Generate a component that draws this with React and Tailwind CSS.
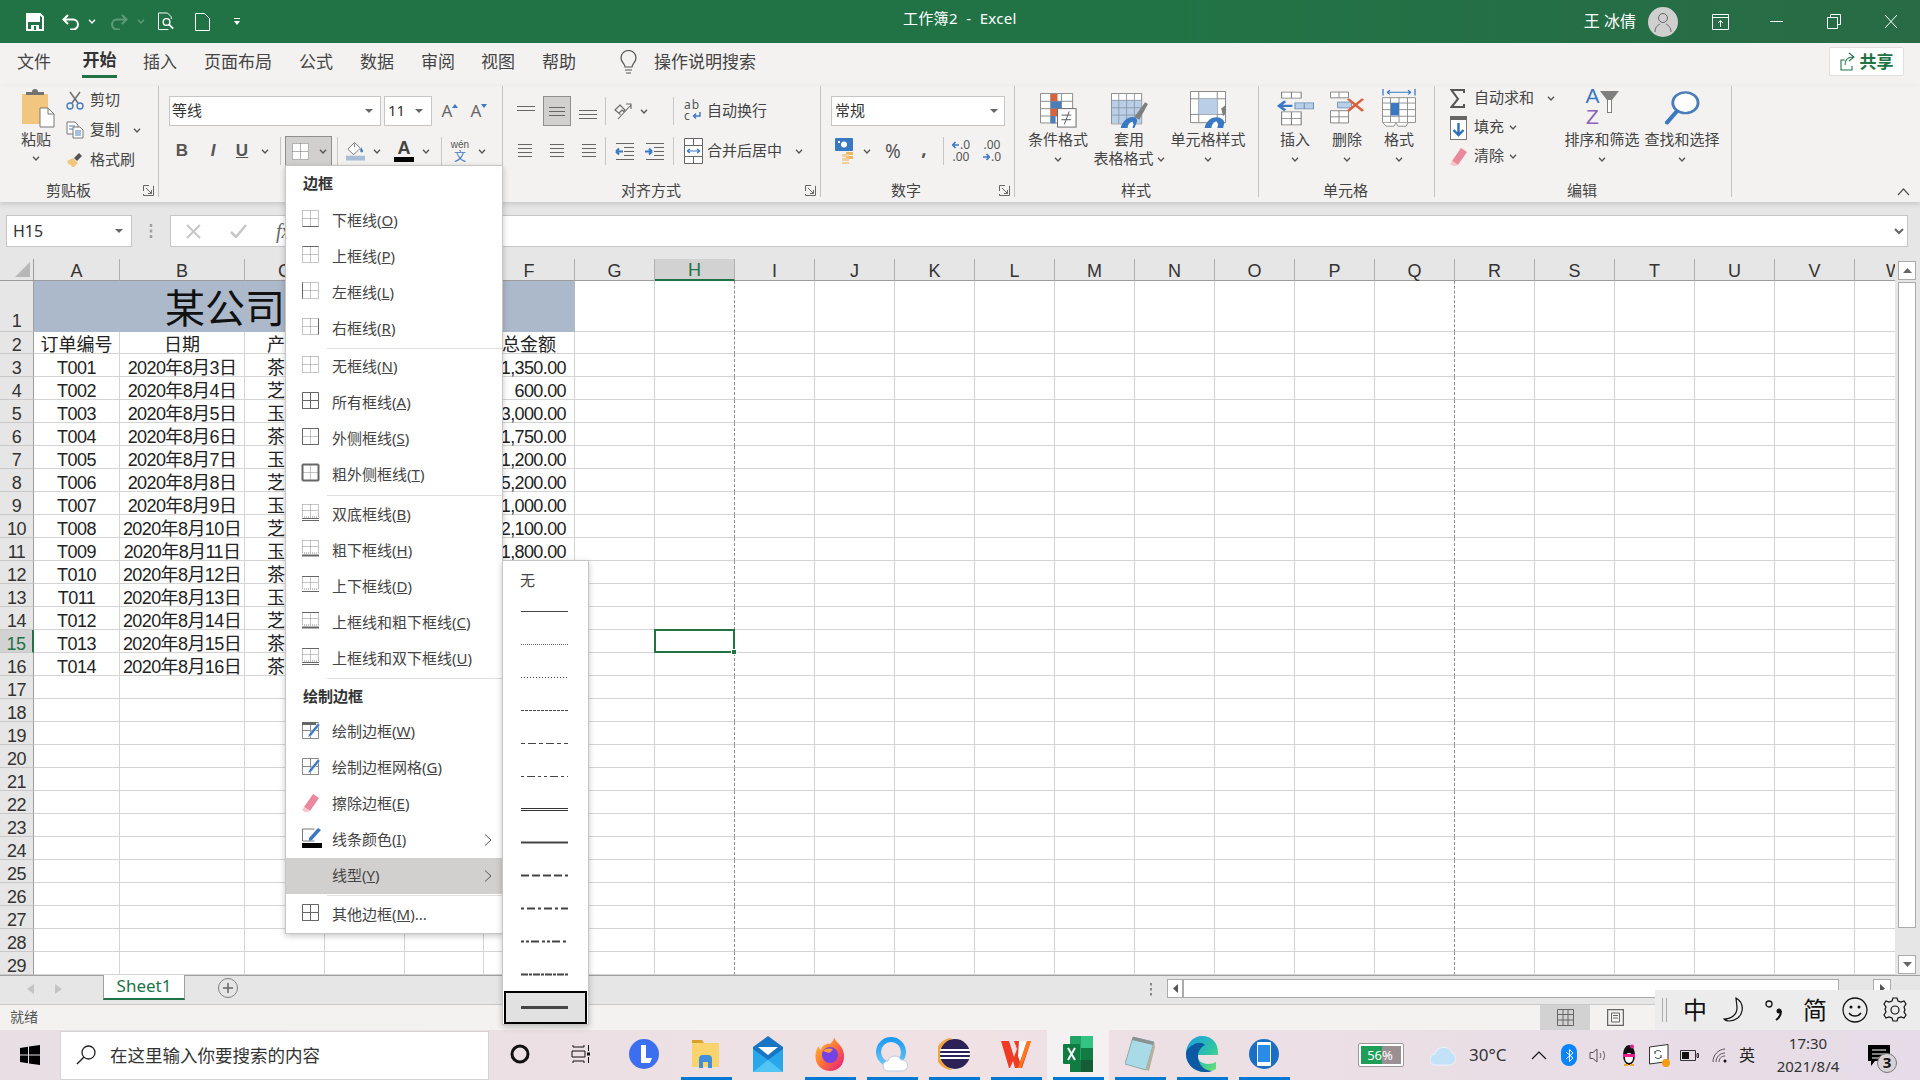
import React from 'react';

const Chev = ({ c = '#555', w = 8, dim = false }) => (
  <svg width={w} height="5" viewBox="0 0 8 5" className="shrink-0"><path d="M1 .8 4 4 7 .8" fill="none" stroke={dim ? '#5f9a79' : c} strokeWidth="1.3" /></svg>
);
const Drop = ({ c = '#666' }) => (
  <svg width="8" height="4" viewBox="0 0 8 4" className="shrink-0"><path d="M0 0h8L4 4z" fill={c} /></svg>
);
const Launcher = () => (
  <svg width="11" height="11" viewBox="0 0 11 11"><path d="M.5 6V.5H6M3 3l5.5 5.5M5 8.5h3.5V5M.5 9v1.5h10V.8" fill="none" stroke="#666" strokeWidth="1" /></svg>
);
const VSep = () => (<div className="w-[4px] h-[28px] flex justify-center shrink-0"><div className="w-px h-full bg-[#c8c6c4]" /></div>);

const Lines = ({ rows, w = 18, h = 18 }) => (
  <svg width={w} height={h} viewBox={`0 0 ${w} ${h}`}>
    {rows.map((r, i) => <path key={i} d={`M${r[0]} ${r[2]}.5H${r[1]}`} stroke="#666" strokeWidth="1" />)}
  </svg>
);

const Slot = ({ className = '', children }) => <div className={`flex items-center justify-center shrink-0 ${className}`}>{children}</div>;

const Group = ({ w, children, label, pl, launcher }) => (
  <div className={`${w} h-[111px] flex flex-col border-r border-[#c4c4c4] shrink-0`}>
    <div className="h-[95px]">{children}</div>
    <div className={`h-[16px] pt-[2px] flex items-center ${pl}`}>
      {label && <span className="text-[15px] leading-[14px] text-[#444]">{label}</span>}
      {launcher && <span className="ml-auto mr-[4px] flex"><Launcher /></span>}
    </div>
  </div>
);

const BigBtn = ({ w, icon, l1, l2, noChev }) => (
  <div className={`${w} flex flex-col items-center pt-[2px] shrink-0`}>
    <div className="h-[40px] flex items-end justify-center">{icon}</div>
    <div className="h-[22px] text-[15px] leading-[22px] whitespace-nowrap text-[#444]">{l1}</div>
    <div className="h-[18px] flex items-center gap-[3px] text-[15px] leading-[16px] whitespace-nowrap text-[#444]">
      {l2 && <span className="-mt-[2px]">{l2}</span>}
      {!noChev && <Chev />}
    </div>
  </div>
);

/* Ribbon icons */
const PasteIcon = () => (
  <svg width="36" height="39" viewBox="0 0 36 39">
    <path d="M2 5h26v30H2z" fill="#f2c67f" />
    <path d="M6 6V3h6a3 3 0 0 1 6 0h6v3z" fill="#737373" />
    <path d="M20 19h8l6 6v13H20z" fill="#fff" stroke="#777" />
    <path d="M28 19v6h6" fill="none" stroke="#777" />
  </svg>
);
const ScissorsIcon = () => (
  <svg width="18" height="19" viewBox="0 0 18 19">
    <path d="M4 1l8 11M14 1 6 12" stroke="#737373" strokeWidth="1.6" fill="none" />
    <circle cx="4" cy="15" r="3" fill="none" stroke="#4a7ebb" strokeWidth="1.4" />
    <circle cx="14" cy="15" r="3" fill="none" stroke="#4a7ebb" strokeWidth="1.4" />
  </svg>
);
const CopyIcon = () => (
  <svg width="18" height="18" viewBox="0 0 18 18">
    <path d="M1 1h8l3 3v9H1z" fill="#fff" stroke="#777" />
    <path d="M3 5h6M3 8h6" stroke="#4a7ebb" />
    <path d="M7 6h7l3 3v8H7z" fill="#fff" stroke="#777" />
    <path d="M9 10h6M9 12h6M9 14h6" stroke="#4a7ebb" />
  </svg>
);
const PainterIcon = () => (
  <svg width="18" height="16" viewBox="0 0 18 16">
    <path d="M1 9l6-3 5 5-4 4H6L4 12 3 13z" fill="#f2c67f" />
    <path d="M8 6l5-5 3 3-5 5z" fill="#555" />
  </svg>
);
const BorderMini = () => (
  <svg width="17" height="17" viewBox="0 0 17 17">
    <rect x="0" y="0" width="17" height="17" fill="#fff" />
    <path d="M.5.5h16v16H.5zM8.500.5v16M.5 8.500h16" fill="none" stroke="#666" strokeDasharray="1 1" />
  </svg>
);
const FillIcon = () => (
  <svg width="20" height="20" viewBox="0 0 20 20">
    <path d="M9 1 2 8l6 6 7-7z" fill="#fff" stroke="#777" />
    <path d="M9 2 9 6" stroke="#777" />
    <path d="M16 6c1 2 2 3 2 4a1.500 1.500 0 0 1-3 0c0-1 0-2 1-4z" fill="#4a7ebb" />
    <rect x="0" y="15" width="20" height="5" fill="#a9bdd6" />
  </svg>
);
const OrientIcon = () => (
  <svg width="20" height="20" viewBox="0 0 20 20">
    <path d="M2 9l5-5 5 5-1.500 1.500L9 9l-3 3 1.500 1.500z" fill="none" stroke="#666" strokeWidth="1.1" />
    <path d="M5 18 18 4M13 3h5v5" fill="none" stroke="#666" strokeWidth="1.1" />
  </svg>
);
const Indent = ({ out }) => (
  <svg width="19" height="17" viewBox="0 0 19 17">
    <path d="M1 .5h18M9 4.500h10M9 8.500h10M9 12.500h10M1 16.500h18" stroke="#666" />
    {out ? <path d="M8 8.500H1M1 8.500l3-3M1 8.500l3 3" stroke="#3b78c4" strokeWidth="2" fill="none" /> : <path d="M0 8.500h7M7 8.500l-3-3M7 8.500l-3 3" stroke="#3b78c4" strokeWidth="2" fill="none" />}
  </svg>
);
const WrapIcon = () => (
  <div className="relative w-[18px] h-[24px] leading-none">
    <span className="block text-[12px] leading-[11px] text-[#555] tracking-[1px]">ab</span>
    <span className="block text-[12px] leading-[11px] text-[#555]">c</span>
    <svg width="9" height="8" viewBox="0 0 9 8" className="absolute left-[8px] top-[13px]"><path d="M8 0v4H2M4 1.500 1.500 4 4 6.500" fill="none" stroke="#3b78c4" strokeWidth="1.4" /></svg>
  </div>
);
const MergeIcon = () => (
  <svg width="19" height="26" viewBox="0 0 19 26">
    <path d="M.5.5h18v25H.5zM.5 7.500h18M.5 18.500h18M9.500.5v7M9.500 18.500v7" fill="#fff" stroke="#666" />
    <path d="M3 13h13M3 13l3-2M3 13l3 2M16 13l-3-2M16 13l-3 2" stroke="#3b78c4" strokeWidth="1.2" fill="none" />
  </svg>
);
const AcctIcon = () => (
  <svg width="20" height="26" viewBox="0 0 20 26">
    <rect x="0" y="0" width="18" height="13" rx="1" fill="#3b78c4" />
    <circle cx="9" cy="6.500" r="3" fill="#fff" />
    <rect x="3" y="3" width="2" height="2" fill="#fff" />
    <rect x="11" y="14" width="7" height="3" fill="#eeb65f" /><rect x="11" y="18" width="7" height="3" fill="#eeb65f" />
    <rect x="7" y="16" width="7" height="3" fill="#f2cf9c" /><rect x="7" y="20" width="7" height="3" fill="#f2cf9c" /><rect x="7" y="24" width="7" height="2" fill="#f2cf9c" />
  </svg>
);
const Decimal = ({ top, bot, inc }) => (
  <div className="flex flex-col items-center text-[12px] leading-[12px] text-[#555] w-[28px]">
    <span className="flex items-center gap-[1px]">{inc ? <svg width="7" height="8" viewBox="0 0 7 8"><path d="M7 4H2M3.500 1 .7 4l2.800 3" stroke="#3b78c4" strokeWidth="1.6" fill="none" /></svg> : null}{top}</span>
    <span className="flex items-center gap-[1px]">{!inc ? <svg width="7" height="8" viewBox="0 0 7 8"><path d="M0 4h5M3.500 1 6.300 4 3.500 7" stroke="#3b78c4" strokeWidth="1.6" fill="none" /></svg> : null}{bot}</span>
  </div>
);
const CondIcon = () => (
  <svg width="37" height="35" viewBox="0 0 38 38" preserveAspectRatio="none">
    <path d="M.5.5h33v32H.5zM.5 9h33M.5 17h33M.5 25h33M11 .5v32M22 .5v32" fill="#fff" stroke="#888" />
    <rect x="11" y="1" width="7" height="8" fill="#d9613c" /><rect x="11" y="9" width="11" height="8" fill="#4a7ebb" />
    <rect x="11" y="17" width="9" height="8" fill="#d9613c" /><rect x="11" y="25" width="5" height="8" fill="#4a7ebb" />
    <rect x="18" y="17" width="19" height="20" fill="#fff" stroke="#666" />
    <path d="M22 24h10M22 29h10M30 20l-5 14" stroke="#555" fill="none" />
  </svg>
);
const TableIcon = () => (
  <svg width="37" height="35" viewBox="0 0 38 38" preserveAspectRatio="none">
    <path d="M.5.5h31v33H.5z" fill="#fff" stroke="#888" />
    <rect x="1" y="8" width="30" height="25" fill="#b9cfe8" />
    <path d="M.5 8h31M.5 16h31M.5 24h31M8 .5v33M16 .5v33M24 .5v33" stroke="#8e9aa7" fill="none" />
    <path d="M24 26 35 10l3 2-9 17z" fill="#7f7f7f" />
    <path d="M10 38c1-6 6-12 12-12 4 0 6 3 4 7l-2 5z" fill="#3b78c4" />
    <path d="M17 38c0-3 2-6 5-7l1 3-1 4z" fill="#fff" />
  </svg>
);
const CellStyleIcon = () => (
  <svg width="37" height="37" viewBox="0 0 38 38" preserveAspectRatio="none">
    <path d="M.5.5h36v32H.5zM.5 8h36M.5 24h36M9 .5v32M28 .5v32" fill="#fff" stroke="#888" />
    <rect x="9" y="8" width="19" height="16" fill="#b9cfe8" />
    <path d="M32 18l5-4v8l-3 4z" fill="#7f7f7f" />
    <path d="M15 38c1-6 6-11 12-11 5 0 9 3 8 7l-1 4z" fill="#3b78c4" />
    <path d="M22 38c0-3 2-6 5-7l2 3-1 4z" fill="#fff" />
  </svg>
);
const InsertIcon = () => (
  <svg width="37" height="35" viewBox="0 0 36 46" preserveAspectRatio="none" className="mb-[2px]">
    <path d="M4.500 1.500h19v8h-19zM14 1.500v8M4.500 27.500h19v17h-19zM14 27.500v17M4.500 36h19" fill="#fff" stroke="#777" />
    <path d="M17.500 15.500h18v8h-18zM26.500 15.500v8" fill="#b9cfe8" stroke="#6d8fb5" />
    <path d="M15 19.500H2M8 13.500l-6 6 6 6" fill="none" stroke="#3b78c4" strokeWidth="3" />
  </svg>
);
const DeleteIcon = () => (
  <svg width="36" height="33" viewBox="0 0 36 46" preserveAspectRatio="none" className="mb-[4px]">
    <path d="M1.500 1.500h18v8h-18zM10 1.500v8M1.500 27.500h18v17h-18zM10 27.500v17M1.500 36h18" fill="#fff" stroke="#777" />
    <path d="M8.500 15.500h14v8h-14z" fill="#b9cfe8" stroke="#6d8fb5" />
    <path d="M19 11l15 17M34 11 19 28" stroke="#d9613c" strokeWidth="3" fill="none" />
  </svg>
);
const FormatIcon = () => (
  <svg width="34" height="38" viewBox="0 0 34 46" preserveAspectRatio="none" className="mb-[1px]">
    <path d="M1 0v8M33 0v8M5 4h24M5 4l3-2.500M5 4l3 2.500M29 4l-3-2.500M29 4l-3 2.500" stroke="#3b78c4" strokeWidth="1.3" fill="none" />
    <path d="M.5 10.500h33v30H.5zM.5 17h33M.5 25h33M.5 33h33M8.500 10.500v30M17 10.500v30M25.500 10.500v30" fill="#fff" stroke="#888" />
    <rect x="9" y="17" width="8" height="15" fill="#3b78c4" />
    <path d="M1 41l3 4h8l2-4M14 41l2 4h8l2-4" fill="#fff" stroke="#888" />
  </svg>
);
const SortIcon = () => (
  <div className="flex items-center gap-0 mb-[1px]">
    <div className="flex flex-col items-center w-[14px]">
      <span className="text-[21px] leading-[20px] font-['Liberation_Sans',sans-serif] text-[#3b78c4]">A</span>
      <span className="text-[21px] leading-[21px] font-['Liberation_Sans',sans-serif] text-[#8a62b8]">Z</span>
    </div>
    <svg width="19" height="23" viewBox="0 0 19 23" className="mb-[8px]"><path d="M0 0h19l-7 9v13H7V9z" fill="#7f7f7f" /><path d="M8 9v12h3V9z" fill="#fff" /></svg>
  </div>
);
const FindIcon = () => (
  <svg width="35" height="35" viewBox="0 0 36 44" preserveAspectRatio="none" className="mb-[3px]">
    <circle cx="21" cy="16" r="13" fill="#fff" stroke="#4a7ebb" strokeWidth="3" />
    <path d="M12 27 2 41" stroke="#3b78c4" strokeWidth="4.500" strokeLinecap="round" />
  </svg>
);
const SigmaIcon = () => (
  <svg width="15" height="20" viewBox="0 0 15 20"><path d="M14 4V1H1.500L8 10l-6.500 8H14v-3" fill="none" stroke="#555" strokeWidth="2" /></svg>
);
const FillDown = () => (
  <svg width="17" height="24" viewBox="0 0 17 24">
    <rect x=".5" y=".5" width="16" height="23" fill="#fff" stroke="#777" /><rect x="0" y="0" width="17" height="4" fill="#666" />
    <path d="M8.500 7v12M3.500 14l5 5 5-5" fill="none" stroke="#2d6fb8" strokeWidth="2.400" />
  </svg>
);
const Eraser = () => (
  <svg width="18" height="19" viewBox="0 0 18 19">
    <path d="M11 1l6 4-9 13-6-4z" fill="#ea899e" />
    <path d="M2 14l6 4-2 1H3l-3-2z" fill="#f6c6d0" />
  </svg>
);

/* Menu icons */
const BorderIcon = ({ sides = [], thick = false }) => {
  const d = { t: 'M.5 .5H16.500', b: 'M.5 16.500H16.500', l: 'M.5 .5V16.500', r: 'M16.500 .5V16.500', h: 'M.5 8.500H16.500', v: 'M8.500 .5V16.500' };
  return (
    <svg width="17" height="18" viewBox="0 0 17 18" overflow="visible">
      <path d="M.5 .5H16.500V16.500H.5ZM8.500 .5V16.500M.5 8.500H16.500" fill="none" stroke="#8a8a8a" strokeDasharray="1 1" />
      {sides.map((s) => <path key={s} d={d[s]} fill="none" stroke="#666" strokeWidth={thick ? 2 : 1} />)}
    </svg>
  );
};
const BottomVar = ({ kind }) => (
  <svg width="17" height="18" viewBox="0 0 17 18" overflow="visible">
    <path d="M.5 .5H16.500V13H.5ZM8.500 .5V13M.5 6.500H16.500" fill="none" stroke="#8a8a8a" strokeDasharray="1 1" />
    {kind === 'double' && <path d="M0 14.500H17M0 16.500H17" stroke="#666" />}
    {kind === 'thick' && <path d="M0 15.500H17" stroke="#666" strokeWidth="2" />}
    {kind === 'tb' && <path d="M0 .5H17M0 15.500H17" stroke="#666" strokeWidth="1" />}
    {kind === 'tthick' && <><path d="M0 .5H17" stroke="#666" /><path d="M0 15.500H17" stroke="#666" strokeWidth="2" /></>}
    {kind === 'tdouble' && <path d="M0 .5H17M0 14.500H17M0 16.500H17" stroke="#666" />}
  </svg>
);
const DrawIcon = ({ grid }) => (
  <svg width="18" height="18" viewBox="0 0 18 18" overflow="visible">
    <path d="M.5 1.500h16v16H.5zM.5 9.500h16M8.500 1.500v16" fill="none" stroke="#8a8a8a" />
    {!grid && <rect x="0" y="1" width="14" height="3" fill="#666" />}
    <path d="M7 13 16 2l2 2-9 11-3 1z" fill="#3b78c4" stroke="#fff" strokeWidth=".5" />
  </svg>
);
const ColorLineIcon = () => (
  <svg width="20" height="20" viewBox="0 0 20 20">
    <path d="M.5 1h12M.5 1v12h12" fill="none" stroke="#777" />
    <path d="M7 10 16 0l3 2-9 10-3 1z" fill="#3b78c4" />
    <rect x="0" y="15" width="20" height="5" fill="#000" />
  </svg>
);
const MenuArrow = () => (
  <svg width="8" height="12" viewBox="0 0 8 12" className="ml-auto mr-[10px]"><path d="M1 .5 7 6 1 11.500" fill="none" stroke="#555" /></svg>
);

const MI = ({ icon, k, label, arrow, active }) => (
  <div className={`h-[36px] flex items-center pl-[16px] text-[15px] text-[#444] ${active ? 'bg-[#d2d0ce]' : ''}`}>
    <div className="w-[30px] h-[36px] flex items-center"><div className="mb-[4px] flex">{icon}</div></div>
    <span className="whitespace-nowrap -mt-[2px]">{label}(<u>{k}</u>){arrow === 'dots' ? '...' : ''}</span>
    {arrow === true && <MenuArrow />}
  </div>
);
const MSep = ({ h }) => (<div className={`${h} flex items-center pl-[41px]`}><div className="w-full h-px bg-[#e1dfdd]" /></div>);

const LineStyle = ({ sw = 1, dash, c = '#444', dbl }) => (
  <svg width="47" height="5" viewBox="0 0 47 5">
    {dbl ? <path d="M0 1.500H47M0 3.500H47" stroke={c} /> : <path d="M0 2.500H47" stroke={c} strokeWidth={sw} strokeDasharray={dash} />}
  </svg>
);

/* Grid data */
const COLS = ['A', 'B', 'C', 'D', 'E', 'F', 'G', 'H', 'I', 'J', 'K', 'L', 'M', 'N', 'O', 'P', 'Q', 'R', 'S', 'T', 'U', 'V', 'W'];
const CW = ['w-[86px]', 'w-[125px]', 'w-[80px]', 'w-[80px]', 'w-[79px]', 'w-[91px]'];
const colW = (i) => CW[i] || 'w-[80px]';
const DATA = {
  3: ['T001', '2020年8月3日', '茶', '1,350.00'],
  4: ['T002', '2020年8月4日', '芝', '600.00'],
  5: ['T003', '2020年8月5日', '玉', '3,000.00'],
  6: ['T004', '2020年8月6日', '茶', '1,750.00'],
  7: ['T005', '2020年8月7日', '玉', '1,200.00'],
  8: ['T006', '2020年8月8日', '芝', '5,200.00'],
  9: ['T007', '2020年8月9日', '玉', '1,000.00'],
  10: ['T008', '2020年8月10日', '芝', '2,100.00'],
  11: ['T009', '2020年8月11日', '玉', '1,800.00'],
  12: ['T010', '2020年8月12日', '茶', ''],
  13: ['T011', '2020年8月13日', '玉', ''],
  14: ['T012', '2020年8月14日', '芝', ''],
  15: ['T013', '2020年8月15日', '茶', ''],
  16: ['T014', '2020年8月16日', '茶', ''],
};
const cellFont = "font-['Liberation_Sans','Noto_Sans_CJK_SC',sans-serif]";

const Cell = ({ i, children, className = '' }) => {
  const dashed = i === 7 || i === 16;
  return (
    <div className={`${colW(i)} h-full shrink-0 border-b border-b-[#d4d4d4] border-r flex items-center ${dashed ? '[border-right-style:dashed] border-r-[#8f8f8f]' : 'border-r-[#d4d4d4]'} ${className}`}>{children}</div>
  );
};

const RowHead = ({ n, active, end, shift }) => (
  <div className={`w-[34px] h-full shrink-0 flex justify-center border-b border-b-[#c8c8c8] tracking-[-0.6px] ${shift} ${end ? 'items-end' : 'items-center'} ${active ? 'bg-[#d2d2d2] text-[#217346] border-r-2 border-r-[#217346]' : 'bg-[#e6e6e6] text-[#333] border-r border-r-[#9c9c9c]'}`}>{n}</div>
);

const GridRow = ({ n }) => {
  const d = DATA[n];
  return (
    <div className="h-[23px] flex leading-[18px] text-[18px] text-[#222]">
      <RowHead n={n} active={n === 15} shift="pt-[5px]" />
      {COLS.map((c, i) => {
        if (d && i === 0) return <Cell key={c} i={i} className="justify-center pt-[5px] tracking-[-0.5px]">{d[0]}</Cell>;
        if (d && i === 1) return <Cell key={c} i={i} className="justify-center pt-[5px] tracking-[-0.6px]">{d[1]}</Cell>;
        if (d && i === 2) return <Cell key={c} i={i} className="pl-[22px] pt-[5px]">{d[2]}</Cell>;
        if (d && i === 5) return <Cell key={c} i={i} className="justify-end pr-[8px] pt-[5px] tracking-[-0.6px]">{d[3]}</Cell>;
        if (n === 15 && i === 7) return (
          <Cell key={c} i={i} className="relative">
            <div className="absolute -left-px -top-px -right-px -bottom-px border-2 border-[#217346]" />
            <div className="absolute -right-[3px] -bottom-[3px] w-[6px] h-[6px] bg-[#217346] border border-white" />
          </Cell>
        );
        return <Cell key={c} i={i} />;
      })}
    </div>
  );
};

/* Taskbar app icons */
const AppL = () => (
  <svg width="30" height="30" viewBox="0 0 30 30">
    <circle cx="15" cy="15" r="15" fill="#3b6ff0" />
    <path d="M12 6h5v13h6l-2 5H12z" fill="#fff" />
  </svg>
);
const AppFolder = () => (
  <svg width="28" height="30" viewBox="0 0 28 30">
    <path d="M0 1h10l2 3H0z" fill="#d9a12c" />
    <rect x="0" y="4" width="27" height="24" fill="#fbd36c" />
    <path d="M7 29V20a4 4 0 0 1 4-4h5a4 4 0 0 1 4 4v9h-4v-6h-5v6z" fill="#3f8fdb" />
  </svg>
);
const AppMail = () => (
  <svg width="30" height="36" viewBox="0 0 30 36">
    <path d="M0 11 15 0l15 11v25H0z" fill="#1775c4" />
    <path d="M5 11h20l-10 8z" fill="#fff" />
    <path d="M0 13 15 24 30 13v23H0z" fill="#28a8ea" />
    <path d="M0 36 15 24l15 12z" fill="#50c5f5" />
  </svg>
);
const AppFox = () => (
  <svg width="30" height="34" viewBox="0 0 30 34">
    <defs><linearGradient id="fx" x1="0" y1="0" x2="1" y2="1"><stop offset="0" stopColor="#ffcb30" /><stop offset=".5" stopColor="#ff7139" /><stop offset="1" stopColor="#e31587" /></linearGradient></defs>
    <path d="M19 0c1 4 5 6 8 11 3 6 3 14-2 19-6 6-17 5-22-2C-1 22 0 13 4 9c0 2 1 3 2 4 1-5 6-7 9-6 2-2 4-4 4-7z" fill="url(#fx)" />
    <circle cx="15" cy="18" r="8" fill="#7542e5" />
    <path d="M8 14c3-3 8-3 10-1l-4 3z" fill="#ff9a3c" />
  </svg>
);
const AppQQB = () => (
  <svg width="32" height="38" viewBox="0 0 32 38">
    <defs><linearGradient id="qb" x1="0" y1="0" x2="0" y2="1"><stop offset="0" stopColor="#1e9bf0" /><stop offset="1" stopColor="#69c5f9" /></linearGradient></defs>
    <circle cx="15" cy="17" r="12.500" fill="none" stroke="url(#qb)" strokeWidth="5" />
    <path d="M12 36a5 5 0 0 1 0-10 7 7 0 0 1 13-1 5.500 5.500 0 0 1 2 11z" fill="#fff" stroke="#bcd" />
  </svg>
);
const AppEclipse = () => (
  <svg width="32" height="32" viewBox="0 0 32 32">
    <path d="M14 0a16 16 0 0 0 0 32 20 20 0 0 1 0-32z" fill="#f0a544" />
    <circle cx="17" cy="16" r="15" fill="#2c2255" />
    <path d="M2 11h30v2H2zM2 15h30v2H2zM2 19h30v2H2z" fill="#fff" />
  </svg>
);
const AppWps = () => (
  <svg width="30" height="28" viewBox="0 0 30 28">
    <path d="M0 1h8l5 16 3-8-3-8h17l-9 27h-7l-2-7-3 7H8z" fill="#f03b24" />
    <path d="M18 1h8l-7 21-2-6z" fill="#fff" />
    <path d="M20 28 30 1h-4l-9 27z" fill="#ff7a1a" />
  </svg>
);
const AppExcel = () => (
  <svg width="30" height="36" viewBox="0 0 30 36">
    <rect x="7" y="0" width="23" height="36" rx="1" fill="#21a366" />
    <rect x="18" y="0" width="12" height="12" fill="#33c481" />
    <rect x="18" y="12" width="12" height="12" fill="#107c41" />
    <rect x="18" y="24" width="12" height="12" fill="#185c37" />
    <rect x="7" y="24" width="11" height="12" fill="#107c41" />
    <rect x="0" y="8" width="17" height="20" rx="1" fill="#107c41" />
    <path d="M5 12l7 12M12 12 5 24" stroke="#fff" strokeWidth="2" />
  </svg>
);
const AppNote = () => (
  <svg width="30" height="36" viewBox="0 0 30 36">
    <path d="M8 1 29 6 21 34 0 28z" fill="#a9dbe7" stroke="#8aa" />
    <path d="M8 1 29 6l-1 3L7 4z" fill="#8a8f8f" />
    <path d="M29 6l-8 28 3 1 6-24z" fill="#b9b09a" />
  </svg>
);
const AppEdge = () => (
  <svg width="32" height="36" viewBox="0 0 32 36">
    <defs>
      <linearGradient id="ed" x1="0" y1="0" x2="1" y2="1"><stop offset="0" stopColor="#1b9de2" /><stop offset=".6" stopColor="#2fc5a5" /><stop offset="1" stopColor="#7ce36a" /></linearGradient>
    </defs>
    <path d="M16 0c10 0 16 7 16 16v3H11c0 5 5 9 11 9 3 0 6-1 8-2v7c-3 2-7 3-11 3C8 36 0 28 0 18 0 8 7 0 16 0z" fill="url(#ed)" />
    <path d="M0 18c0 10 8 18 19 18 3 0 5 0 7-1-6 0-14-5-14-15 0-5 3-9 7-11-3-3-8-3-12 0C3 11 0 14 0 18z" fill="#0c59a4" />
  </svg>
);
const AppPhone = () => (
  <svg width="30" height="30" viewBox="0 0 30 30">
    <circle cx="15" cy="15" r="15" fill="#1a6fc4" />
    <rect x="8" y="3" width="14" height="24" rx="1" fill="#fff" />
    <rect x="9" y="6" width="12" height="17" fill="#2a8ce8" />
  </svg>
);
const AppSlot = ({ children, run, active }) => (
  <div className={`w-[62px] h-[50px] shrink-0 flex flex-col items-center ${active ? 'bg-[#f5f0f2]' : ''}`}>
    <div className="h-[47px] flex items-center justify-center">{children}</div>
    <div className={`h-[3px] w-[51px] ${run ? 'bg-[#0078d4]' : ''}`} />
  </div>
);

export default function App() {
  return (
    <div className="relative w-[1920px] h-[1080px] overflow-hidden flex flex-col bg-white font-['Noto_Sans','Noto_Sans_CJK_SC',sans-serif]">
      {/* Title bar */}
      <div className="h-[43px] shrink-0 flex items-center text-white bg-gradient-to-r from-[#217346] from-60% to-[#286b45]">
        <div className="ml-[26px] w-[18px] flex">
          <svg width="18" height="18" viewBox="0 0 18 18"><path d="M1 1h13l3 3v13H1z" fill="none" stroke="#fff" strokeWidth="2" /><rect x="2" y="2" width="12" height="7" fill="#fff" /><rect x="5" y="12" width="8" height="5" fill="#fff" /><rect x="8" y="13" width="2" height="4" fill="#217346" /></svg>
        </div>
        <div className="ml-[18px] w-[18px] flex"><svg width="18" height="16" viewBox="0 0 18 16"><path d="M6 1 1.500 5.500 6 10M2 5.500h9a5 5 0 0 1 0 10H8" fill="none" stroke="#fff" strokeWidth="2" /></svg></div>
        <div className="ml-[8px]"><Chev c="#fff" /></div>
        <div className="ml-[14px] w-[18px] flex"><svg width="18" height="16" viewBox="0 0 18 16"><path d="M12 1l4.500 4.500L12 10M16 5.500H7a5 5 0 0 0 0 10h3" fill="none" stroke="#5f9a79" strokeWidth="2" /></svg></div>
        <div className="ml-[9px]"><Chev dim /></div>
        <div className="ml-[13px] w-[18px] flex"><svg width="19" height="19" viewBox="0 0 19 19"><path d="M11 18H.5V.5H10L14 4.500V7" fill="none" stroke="#fff" /><circle cx="9" cy="10" r="3.500" fill="none" stroke="#fff" strokeWidth="1.500" /><path d="M11.500 12.500 16 17" stroke="#fff" strokeWidth="2" /></svg></div>
        <div className="ml-[19px] w-[15px] flex"><svg width="15" height="18" viewBox="0 0 15 18"><path d="M.5.5h9l5 5v12H.5z" fill="none" stroke="#fff" /></svg></div>
        <div className="ml-[24px] w-[6px] flex"><svg width="6" height="7" viewBox="0 0 6 7"><path d="M0 .5h6" stroke="#fff" /><path d="M0 3h6L3 7z" fill="#fff" /></svg></div>
        <div className="ml-[663px] text-[15px] tracking-[0.3px] whitespace-pre leading-[26px] mb-[8px]">工作簿2  -  Excel</div>
        <div className="ml-auto flex items-center">
          <span className="text-[16px] whitespace-nowrap mb-[1px] ml-[1px]">王 冰倩</span>
          <div className="ml-[12px] w-[30px] h-[30px] rounded-full bg-[#cfcfcf] flex items-center justify-center">
            <svg width="18" height="20" viewBox="0 0 18 20"><circle cx="9" cy="6" r="4.500" fill="none" stroke="#666" /><path d="M1 20c0-5 3-7 5-8M17 20c0-5-3-7-5-8" fill="none" stroke="#666" /></svg>
          </div>
          <div className="ml-[34px] w-[17px] flex"><svg width="17" height="16" viewBox="0 0 17 16"><path d="M.5.5h16v15H.5zM.5 3.500h16M8.500 13V7M6 9l2.500-2.500L11 9" fill="none" stroke="#fff" /></svg></div>
          <div className="ml-[41px] w-[13px] flex"><svg width="13" height="1" viewBox="0 0 13 1"><path d="M0 .5h13" stroke="#fff" /></svg></div>
          <div className="ml-[44px] w-[14px] flex"><svg width="14" height="15" viewBox="0 0 14 15"><path d="M.5 3.500h10v11H.5zM3.500 3.500v-3h10v10h-3" fill="none" stroke="#fff" /></svg></div>
          <div className="ml-[43px] mr-[22px] w-[14px] flex"><svg width="14" height="15" viewBox="0 0 14 15"><path d="M1 1l12 13M13 1 1 14" stroke="#fff" /></svg></div>
        </div>
      </div>

      {/* Tabs */}
      <div className="relative z-10 h-[43px] shrink-0 bg-[#f3f2f1] flex items-start text-[17px] text-[#444] pl-[17px]">
        <span className="h-[38px] leading-[38px]">文件</span>
        <div className="ml-[31px] w-[35px] h-[35px] border-b-[3px] border-[#217346] flex items-center justify-center pt-[2px] font-bold text-[#333] text-[17px]">开始</div>
        <span className="ml-[26px] h-[38px] leading-[38px]">插入</span>
        <span className="ml-[27px] h-[38px] leading-[38px]">页面布局</span>
        <span className="ml-[27px] h-[38px] leading-[38px]">公式</span>
        <span className="ml-[27px] h-[38px] leading-[38px]">数据</span>
        <span className="ml-[27px] h-[38px] leading-[38px]">审阅</span>
        <span className="ml-[26px] h-[38px] leading-[38px]">视图</span>
        <span className="ml-[27px] h-[38px] leading-[38px]">帮助</span>
        <div className="ml-[44px] h-[36px] flex items-center">
          <svg width="17" height="26" viewBox="0 0 17 26" className="mt-[4px]"><path d="M5 17c0-3-4-5-4-9a7.500 7.500 0 0 1 15 0c0 4-4 6-4 9zM5 20h7M6 23h5" fill="none" stroke="#555" strokeWidth="1.200" /></svg>
        </div>
        <span className="ml-[17px] h-[38px] leading-[38px]">操作说明搜索</span>
        <div className="ml-auto mr-[16px] mt-[4px] w-[75px] h-[29px] bg-white border border-[#e1dfdd] rounded-[2px] flex items-center justify-center gap-[5px]">
          <svg width="15" height="19" viewBox="0 0 15 19"><path d="M5 8H1v10h11v-4M5 13c0-5 3-8 8-8M9 1l5 4-5 4" fill="none" stroke="#217346" strokeWidth="1.100" /></svg>
          <span className="text-[17px] leading-[20px] font-bold text-[#217346]">共享</span>
        </div>
      </div>

      {/* Ribbon */}
      <div className="relative z-10 h-[116px] shrink-0 bg-[#f3f2f1] flex items-start shadow-[0_2px_5px_rgba(0,0,0,0.14)]">
        <Group w="w-[159px]" label="剪贴板" pl="pl-[46px]" launcher>
          <div className="flex">
            <div className="w-[66px] pl-[6px] flex flex-col items-center pt-[3px]">
              <div className="ml-[3px] flex"><PasteIcon /></div>
              <div className="h-[22px] text-[15px] leading-[22px] text-[#444]">粘贴</div>
              <div className="h-[16px] flex items-center"><Chev /></div>
            </div>
            <div className="flex flex-col -mt-[1px] text-[15px] text-[#444]">
              <div className="h-[30px] flex items-center"><div className="w-[24px] flex"><ScissorsIcon /></div><span className="-mt-[2px]">剪切</span></div>
              <div className="h-[30px] flex items-center"><div className="w-[24px] flex"><CopyIcon /></div><span className="-mt-[2px]">复制</span><span className="ml-[13px]"><Chev /></span></div>
              <div className="h-[30px] flex items-center"><div className="w-[24px] flex"><PainterIcon /></div><span className="-mt-[2px]">格式刷</span></div>
            </div>
          </div>
        </Group>
        <Group w="w-[344px]" pl="pl-[10px]">
          <div className="pt-[10px] flex flex-col gap-[10px]">
            <div className="h-[30px] flex items-center pl-[10px]">
              <div className="w-[212px] h-[30px] bg-white border border-[#c8c6c4] flex items-center pl-[2px] pr-[7px] text-[15px] text-[#333]"><span className="-mt-[2px]">等线</span><span className="ml-auto"><Drop /></span></div>
              <div className="ml-[3px] w-[48px] h-[30px] bg-white border border-[#c8c6c4] flex items-center pl-[3px] pr-[8px] text-[15px] text-[#333]"><span className="-mt-[2px]">11</span><span className="ml-auto"><Drop /></span></div>
              <Slot className="ml-[4px] w-[28px] text-[17px] text-[#666]"><span>A</span><svg width="6" height="4" viewBox="0 0 6 4" className="mb-[10px]"><path d="M0 4h6L3 0z" fill="#3b78c4" /></svg></Slot>
              <Slot className="ml-[1px] w-[28px] text-[17px] text-[#666]"><span>A</span><svg width="6" height="4" viewBox="0 0 6 4" className="mb-[10px]"><path d="M0 0h6L3 4z" fill="#3b78c4" /></svg></Slot>
            </div>
            <div className="h-[30px] flex items-center pl-[8px] text-[#555] font-['Liberation_Sans',sans-serif] text-[17px]">
              <Slot className="w-[30px] font-bold">B</Slot>
              <Slot className="ml-[1px] w-[30px] font-bold italic">I</Slot>
              <Slot className="w-[28px] font-bold underline">U</Slot>
              <Slot className="ml-[2px] w-[14px]"><Chev /></Slot>
              <div className="ml-[6px]"><VSep /></div>
              <Slot className="ml-[3px] w-[47px] h-[30px] bg-[#d2d0ce] border border-[#8f8f8f] gap-[10px] pl-[2px]"><BorderMini /><Chev /></Slot>
              <div className="ml-[3px]"><VSep /></div>
              <Slot className="ml-[7px] w-[19px]"><FillIcon /></Slot>
              <Slot className="ml-[8px] w-[8px]"><Chev /></Slot>
              <div className="ml-[13px] w-[20px] flex flex-col items-center">
                <span className="h-[14px] leading-[14px] text-[#444] font-bold text-[18px]">A</span>
                <div className="w-[20px] h-[5px] mt-[2px] bg-black" />
              </div>
              <Slot className="ml-[8px] w-[8px]"><Chev /></Slot>
              <div className="ml-[9px]"><VSep /></div>
              <div className="ml-[7px] w-[20px] flex flex-col items-center leading-none">
                <span className="text-[10px] leading-[10px] text-[#555]">wén</span>
                <span className="text-[12px] leading-[12px] text-[#3b78c4] font-['Noto_Sans_CJK_SC',sans-serif]">文</span>
              </div>
              <Slot className="ml-[8px] w-[8px]"><Chev /></Slot>
            </div>
          </div>
        </Group>
        <Group w="w-[318px]" label="对齐方式" pl="pl-[118px]" launcher>
          <div className="pt-[10px] flex flex-col gap-[10px] pl-[8px]">
            <div className="h-[30px] flex items-center text-[15px] text-[#444]">
              <Slot className="w-[30px]"><Lines rows={[[0, 18, 4], [0, 18, 8]]} /></Slot>
              <Slot className="w-[32px]"><div className="w-[28px] h-[30px] bg-[#d2d0ce] border border-[#8f8f8f] flex items-center justify-center"><Lines rows={[[1, 17, 5], [1, 17, 9], [1, 17, 13]]} /></div></Slot>
              <Slot className="w-[30px]"><Lines rows={[[0, 18, 8], [0, 18, 12], [0, 18, 16]]} /></Slot>
              <VSep />
              <Slot className="ml-[2px] w-[28px]"><OrientIcon /></Slot>
              <Slot className="w-[13px]"><Chev /></Slot>
              <div className="ml-[21px]"><VSep /></div>
              <Slot className="ml-[8px] w-[20px]"><WrapIcon /></Slot>
              <span className="ml-[4px] -mt-[2px]">自动换行</span>
            </div>
            <div className="h-[30px] flex items-center text-[15px] text-[#444]">
              <Slot className="w-[30px]"><Lines rows={[[1, 15, 2], [1, 15, 6], [1, 15, 10], [1, 15, 14]]} /></Slot>
              <Slot className="w-[32px]"><Lines rows={[[2, 16, 2], [2, 16, 6], [2, 16, 10], [2, 16, 14]]} /></Slot>
              <Slot className="w-[30px]"><Lines rows={[[3, 17, 2], [3, 17, 6], [3, 17, 10], [3, 17, 14]]} /></Slot>
              <VSep />
              <Slot className="ml-[2px] w-[30px]"><Indent out /></Slot>
              <Slot className="w-[30px]"><Indent /></Slot>
              <div className="ml-[2px]"><VSep /></div>
              <Slot className="ml-[8px] w-[20px]"><MergeIcon /></Slot>
              <span className="ml-[4px] -mt-[2px]">合并后居中</span>
              <span className="ml-[13px]"><Chev /></span>
            </div>
          </div>
        </Group>
        <Group w="w-[194px]" label="数字" pl="pl-[70px]" launcher>
          <div className="pt-[10px] flex flex-col gap-[10px]">
            <div className="h-[30px] flex items-center pl-[10px]">
              <div className="w-[174px] h-[30px] bg-white border border-[#c8c6c4] flex items-center pl-[3px] pr-[6px] text-[15px] text-[#333]"><span className="-mt-[2px]">常规</span><span className="ml-auto"><Drop /></span></div>
            </div>
            <div className="h-[30px] flex items-center pl-[12px] text-[#555]">
              <Slot className="w-[24px]"><AcctIcon /></Slot>
              <Slot className="ml-[6px] w-[8px]"><Chev /></Slot>
              <Slot className="ml-[7px] w-[30px] text-[19px]">%</Slot>
              <Slot className="ml-[1px] w-[30px] text-[19px] font-bold leading-none pb-[6px]">,</Slot>
              <div className="ml-[2px]"><VSep /></div>
              <Slot className="ml-[2px] w-[28px]"><Decimal top=".0" bot=".00" inc /></Slot>
              <Slot className="ml-[3px] w-[28px]"><Decimal top=".00" bot=".0" /></Slot>
            </div>
          </div>
        </Group>
        <Group w="w-[244px]" label="样式" pl="pl-[106px]">
          <div className="flex pl-[7px]">
            <BigBtn w="w-[72px]" icon={<CondIcon />} l1="条件格式" />
            <BigBtn w="w-[70px]" icon={<TableIcon />} l1="套用" l2="表格格式" />
            <BigBtn w="w-[88px]" icon={<CellStyleIcon />} l1="单元格样式" />
          </div>
        </Group>
        <Group w="w-[176px]" label="单元格" pl="pl-[64px]">
          <div className="flex pl-[10px]">
            <BigBtn w="w-[52px]" icon={<InsertIcon />} l1="插入" />
            <BigBtn w="w-[52px]" icon={<DeleteIcon />} l1="删除" />
            <BigBtn w="w-[52px]" icon={<FormatIcon />} l1="格式" />
          </div>
        </Group>
        <Group w="w-[297px]" label="编辑" pl="pl-[132px]">
          <div className="flex">
            <div className="w-[127px] pl-[15px] -mt-[2px] flex flex-col text-[15px] text-[#444]">
              <div className="h-[29px] flex items-center"><div className="w-[24px] flex"><SigmaIcon /></div><span className="-mt-[2px]">自动求和</span><span className="ml-[13px]"><Chev /></span></div>
              <div className="h-[29px] flex items-center"><div className="w-[24px] flex"><FillDown /></div><span className="-mt-[2px]">填充</span><span className="ml-[5px]"><Chev /></span></div>
              <div className="h-[29px] flex items-center"><div className="w-[24px] flex"><Eraser /></div><span className="-mt-[2px]">清除</span><span className="ml-[5px]"><Chev /></span></div>
            </div>
            <BigBtn w="w-[80px]" icon={<SortIcon />} l1="排序和筛选" />
            <BigBtn w="w-[80px]" icon={<FindIcon />} l1="查找和选择" />
          </div>
        </Group>
        <div className="flex-1 h-[111px] flex items-end justify-end pr-[10px] pb-[1px]">
          <svg width="13" height="8" viewBox="0 0 13 8"><path d="M1 7l5.500-6L12 7" fill="none" stroke="#555" strokeWidth="1.200" /></svg>
        </div>
      </div>

      {/* Formula bar */}
      <div className="h-[57px] shrink-0 bg-[#e6e6e6] flex items-start pt-[13px] pl-[6px] pr-[12px]">
        <div className="w-[126px] h-[32px] bg-white border border-[#c8c6c4] flex items-center pl-[6px] pr-[8px] text-[16px] text-[#333]">
          <span>H15</span><span className="ml-auto"><Drop /></span>
        </div>
        <div className="w-[38px] h-[32px] flex items-center justify-center">
          <svg width="4" height="14" viewBox="0 0 4 14"><path d="M2 0v3M2 5.500v3M2 11v3" stroke="#a0a0a0" strokeWidth="2.500" /></svg>
        </div>
        <div className="flex-1 h-[32px] bg-white border border-[#c8c6c4] flex items-center">
          <div className="ml-[15px] w-[16px] flex"><svg width="15" height="15" viewBox="0 0 15 15"><path d="M1 1l13 13M14 1 1 14" stroke="#c6c6c6" strokeWidth="2" /></svg></div>
          <div className="ml-[28px] w-[17px] flex"><svg width="17" height="14" viewBox="0 0 17 14"><path d="M1 8l5 5L16 1" fill="none" stroke="#c6c6c6" strokeWidth="2.500" /></svg></div>
          <span className="ml-[29px] text-[20px] italic font-['Liberation_Serif',serif] text-[#666]">fx</span>
          <span className="ml-auto mr-[3px]"><svg width="10" height="7" viewBox="0 0 10 7"><path d="M1 1l4 4 4-4" fill="none" stroke="#666" strokeWidth="2" /></svg></span>
        </div>
      </div>

      {/* Grid + vertical scrollbar */}
      <div className="h-[716px] shrink-0 flex bg-[#e6e6e6]">
        <div className={`w-[1895px] overflow-hidden bg-white ${cellFont}`}>
          <div className="h-[22px] flex text-[18px] leading-[18px] text-[#333]">
            <div className="w-[34px] shrink-0 bg-[#e6e6e6] border-r border-b border-[#9c9c9c] flex items-end justify-end pr-[3px] pb-[3px]">
              <svg width="15" height="15" viewBox="0 0 15 15"><path d="M15 0v15H0z" fill="#b7b7b7" /></svg>
            </div>
            {COLS.map((c, i) => (
              <div key={c} className={`${colW(i)} shrink-0 flex items-center justify-center pt-[2px] border-r border-r-[#b0b0b0] ${i === 7 ? 'bg-[#d2d2d2] text-[#217346] border-b-2 border-b-[#217346]' : 'bg-[#e6e6e6] border-b border-b-[#9c9c9c]'}`}>{c}</div>
            ))}
          </div>
          <div className="h-[51px] flex text-[18px] leading-[18px] text-[#222]">
            <RowHead n={1} end shift="pb-[1px]" />
            <div className="w-[541px] h-full shrink-0 bg-[#acb9ca] flex items-end pl-[131px] text-[40px] leading-[46px] text-[#111]">某公司</div>
            {COLS.slice(6).map((c, k) => <Cell key={c} i={k + 6} />)}
          </div>
          <div className="h-[22px] flex text-[18px] leading-[18px] text-[#222]">
            <RowHead n={2} shift="pt-[4px]" />
            <Cell i={0} className="justify-center pt-[4px]">订单编号</Cell>
            <Cell i={1} className="justify-center pt-[4px]">日期</Cell>
            <Cell i={2} className="pl-[22px] pt-[4px]">产</Cell>
            <Cell i={3} /><Cell i={4} />
            <Cell i={5} className="justify-center pt-[4px]">总金额</Cell>
            {COLS.slice(6).map((c, k) => <Cell key={c} i={k + 6} />)}
          </div>
          {Array.from({ length: 27 }, (_, k) => <GridRow key={k} n={k + 3} />)}
        </div>
        <div className="w-[25px] shrink-0 flex flex-col pl-[3px] pr-[4px]">
          <div className="h-[19px] mt-[2px] shrink-0 bg-white border border-[#ababab] flex items-center justify-center"><svg width="9" height="5" viewBox="0 0 9 5"><path d="M0 5h9L4.500 0z" fill="#666" /></svg></div>
          <div className="h-[646px] mt-[2px] shrink-0 bg-white border border-[#ababab]" />
          <div className="flex-1" />
          <div className="h-[19px] mb-[1px] shrink-0 bg-white border border-[#ababab] flex items-center justify-center"><svg width="9" height="5" viewBox="0 0 9 5"><path d="M0 0h9L4.500 5z" fill="#666" /></svg></div>
        </div>
      </div>

      {/* Sheet bar */}
      <div className="h-[29px] shrink-0 bg-[#e6e6e6] border-t border-[#a0a0a0] flex items-start">
        <div className="ml-[27px] mt-[8px] flex"><svg width="7" height="10" viewBox="0 0 7 10"><path d="M7 0v10L0 5z" fill="#c4c4c4" /></svg></div>
        <div className="ml-[21px] mt-[8px] flex"><svg width="7" height="10" viewBox="0 0 7 10"><path d="M0 0v10l7-5z" fill="#c4c4c4" /></svg></div>
        <div className="ml-[41px] w-[82px] h-[25px] -mt-px bg-white border-x border-[#a0a0a0] border-b-2 border-b-[#217346] flex items-center justify-center text-[17px] leading-[20px] pb-[2px] text-[#217346]">Sheet1</div>
        <div className="ml-[33px] mt-[2px] w-[20px] h-[20px] rounded-full border border-[#808080] flex items-center justify-center text-[#666]">
          <svg width="12" height="12" viewBox="0 0 12 12"><path d="M6 1v10M1 6h10" stroke="#666" strokeWidth="1.500" /></svg>
        </div>
        <div className="ml-[911px] mt-[7px] flex"><svg width="4" height="13" viewBox="0 0 4 13"><path d="M2 0v2.500M2 5v2.500M2 10v2.500" stroke="#888" strokeWidth="2" /></svg></div>
        <div className="ml-[14px] mt-[3px] w-[16px] h-[19px] bg-white border border-[#ababab] flex items-center justify-center"><svg width="5" height="9" viewBox="0 0 5 9"><path d="M5 0v9L0 4.500z" fill="#555" /></svg></div>
        <div className="mt-[3px] w-[656px] h-[19px] bg-white border border-[#ababab]" />
        <div className="mt-[3px] w-[34px] h-[19px] bg-[#e6e6e6]" />
        <div className="mt-[3px] w-[18px] h-[19px] bg-white border border-[#ababab] flex items-center justify-center"><svg width="5" height="9" viewBox="0 0 5 9"><path d="M0 0v9l5-4.500z" fill="#555" /></svg></div>
      </div>

      {/* Status bar */}
      <div className="h-[26px] shrink-0 bg-[#f3f2f1] border-t border-[#c8c8c8] flex items-center text-[14px] text-[#555]">
        <span className="ml-[10px] -mt-[2px]">就绪</span>
        <div className="ml-auto mr-[280px] flex">
          <div className="w-[50px] h-[25px] bg-[#d2d2d2] flex items-center justify-center"><svg width="17" height="17" viewBox="0 0 17 17"><path d="M.5.5h16v16H.5zM.5 5.500h16M.5 11h16M6 .5v16M11 .5v16" fill="none" stroke="#666" /></svg></div>
          <div className="w-[50px] h-[25px] flex items-center justify-center"><svg width="17" height="17" viewBox="0 0 17 17"><path d="M.5.5h16v16H.5z" fill="none" stroke="#666" strokeWidth="1.500" /><path d="M4.500 4h8v9h-8zM6 6.500h5M6 9h5" fill="none" stroke="#666" /></svg></div>
        </div>
      </div>

      {/* Taskbar */}
      <div className="h-[50px] shrink-0 flex items-center bg-gradient-to-r from-[#e8dfe4] via-[#efe1e4] to-[#e6dce7]">
        <div className="w-[60px] flex justify-center">
          <svg width="20" height="20" viewBox="0 0 20 20"><path d="M0 3l8-1.200V9.500H0zM9 1.600 20 0v9.500H9zM0 10.500h8v7.700L0 17zM9 10.500h11V20L9 18.400z" fill="#000" /></svg>
        </div>
        <div className="w-[429px] h-[49px] bg-white border border-[#d4d4d4] flex items-center">
          <svg width="20" height="20" viewBox="0 0 20 20" className="ml-[15px]"><circle cx="12.500" cy="7.500" r="6.500" fill="none" stroke="#222" strokeWidth="1.300" /><path d="M8 12 1 19" stroke="#222" strokeWidth="1.500" /></svg>
          <span className="ml-[14px] text-[17.5px] text-[#333] whitespace-nowrap">在这里输入你要搜索的内容</span>
        </div>
        <AppSlot><svg width="20" height="20" viewBox="0 0 20 20"><circle cx="10" cy="10" r="8" fill="none" stroke="#111" strokeWidth="3" /></svg></AppSlot>
        <AppSlot><div className="mr-[4px] flex"><svg width="20" height="20" viewBox="0 0 20 20"><path d="M3 1v2h11V1M3 19v-2h11v2M2 7h13v6H2z" fill="none" stroke="#111" /><path d="M18.500 1v6M18.500 13v6" stroke="#111" /><rect x="17" y="8.500" width="3" height="3" fill="#111" /></svg></div></AppSlot>
        <AppSlot><AppL /></AppSlot>
        <AppSlot run><AppFolder /></AppSlot>
        <AppSlot><AppMail /></AppSlot>
        <AppSlot run><AppFox /></AppSlot>
        <AppSlot run><AppQQB /></AppSlot>
        <AppSlot run><AppEclipse /></AppSlot>
        <AppSlot run><AppWps /></AppSlot>
        <AppSlot run active><AppExcel /></AppSlot>
        <AppSlot run><AppNote /></AppSlot>
        <AppSlot run><AppEdge /></AppSlot>
        <AppSlot run><AppPhone /></AppSlot>
        <div className="ml-[63px] w-[46px] h-[24px] border border-[#999] bg-white rounded-[2px] p-[2px] flex shrink-0">
          <div className="w-[21px] bg-[#1e9e57] flex items-center justify-end text-[13px] text-white leading-none">56</div>
          <div className="flex-1 bg-[#9a8f92] flex items-center text-[13px] text-white leading-none">%</div>
        </div>
        <div className="ml-[26px] w-[27px] flex shrink-0">
          <svg width="27" height="21" viewBox="0 0 27 21"><path d="M6 20a5.500 5.500 0 0 1-1-11 9 9 0 0 1 17-1 6.500 6.500 0 0 1-1 12z" fill="#c4e2f7" stroke="#e8f4fc" /></svg>
        </div>
        <span className="ml-[12px] w-[40px] shrink-0 text-[17px] text-[#333] whitespace-nowrap">30°C</span>
        <div className="ml-[22px] w-[16px] shrink-0 flex"><svg width="16" height="9" viewBox="0 0 16 9"><path d="M1 8l7-7 7 7" fill="none" stroke="#111" strokeWidth="1.200" /></svg></div>
        <div className="ml-[14px] w-[16px] h-[22px] rounded-[8px] bg-[#0a84ff] flex items-center justify-center shrink-0"><svg width="9" height="15" viewBox="0 0 9 15"><path d="M1 4l7 6-3.500 3.500v-12L8 5l-7 6" fill="none" stroke="#fff" /></svg></div>
        <div className="ml-[12px] w-[19px] shrink-0 flex"><svg width="19" height="17" viewBox="0 0 19 17"><path d="M1 5.500h3L8 2v13l-4-3.500H1zM11 6c1 2 1 3 0 5M14 4c2 3 2 6 0 9" fill="none" stroke="#555" /></svg></div>
        <div className="ml-[13px] w-[16px] shrink-0 flex"><svg width="16" height="22" viewBox="0 0 16 22"><ellipse cx="8" cy="11" rx="6" ry="10" fill="#111" /><ellipse cx="8" cy="14" rx="4" ry="5" fill="#fff" /><rect x="2" y="10" width="12" height="3" fill="#e91e8c" /><circle cx="11" cy="2.500" r="2" fill="#e91e8c" /><path d="M3 20h4v2H3zM9 20h4v2H9z" fill="#f5a623" /></svg></div>
        <div className="ml-[12px] w-[20px] shrink-0 relative flex"><svg width="20" height="22" viewBox="0 0 20 22"><path d="M.5 3 19 .5v17L.5 20z" fill="#fff" stroke="#333" /><path d="M6 8c2-2 4-2 6 0M12 13c-2 2-4 2-6 0M6 7v3M12 14v-3" fill="none" stroke="#333" /></svg><div className="absolute right-[-1px] bottom-[-1px] w-[8px] h-[8px] rounded-full bg-[#f39c12]" /></div>
        <div className="ml-[11px] w-[19px] shrink-0 flex"><svg width="19" height="11" viewBox="0 0 19 11"><path d="M.5.5h15v10H.5zM17 3.500h1.500v4H17z" fill="none" stroke="#333" /><rect x="2" y="2" width="7" height="7" fill="#111" /></svg></div>
        <div className="ml-[13px] w-[17px] shrink-0 flex"><svg width="17" height="15" viewBox="0 0 17 15"><path d="M1 14C1 7 6 1.500 13 1M4 14c0-5 4-9 9-9M7 14c0-3 2-6 6-6" fill="none" stroke="#555" /><circle cx="13" cy="13" r="1.500" fill="#111" /></svg></div>
        <span className="ml-[10px] w-[17px] shrink-0 text-[16px] leading-none text-[#222]">英</span>
        <div className="ml-[7px] w-[90px] shrink-0 flex flex-col items-center text-[15px] leading-[23px] text-[#333]"><span>17:30</span><span>2021/8/4</span></div>
        <div className="ml-[15px] w-[24px] shrink-0 relative flex">
          <svg width="22" height="23" viewBox="0 0 22 23"><path d="M0 1h22v16H7l-4 5v-5H0z" fill="#000" /><path d="M4 6h14M4 10h14M4 14h10" stroke="#fff" /></svg>
          <div className="absolute left-[9px] top-[9px] w-[20px] h-[20px] rounded-full bg-[#d8d2d6] border border-[#777] flex items-center justify-center text-[15px] font-bold leading-none text-[#111]">3</div>
        </div>
      </div>

      {/* IME toolbar */}
      <div className="absolute right-0 bottom-[50px] w-[265px] h-[40px] bg-[#ececec] flex items-center text-[#111]">
        <div className="ml-[7px] w-[5px] h-[24px] border-x border-[#aaa] shrink-0" />
        <div className="ml-[8px] w-[40px] flex justify-center text-[24px] leading-none">中</div>
        <div className="w-[40px] flex justify-center"><svg width="24" height="26" viewBox="0 0 24 26"><path d="M13 1c5 3 7 8 6 13-1 6-7 10-13 10-2 0-4-1-5-2 8 0 13-5 13-11 0-4-1-7-1-10z" fill="none" stroke="#111" strokeWidth="1.200" /></svg></div>
        <div className="w-[40px] flex justify-center"><svg width="22" height="24" viewBox="0 0 22 24"><circle cx="5" cy="6" r="3" fill="none" stroke="#111" strokeWidth="1.300" /><circle cx="15" cy="13" r="2.500" fill="#111" /><path d="M17 13c0 4-2 7-5 9" fill="none" stroke="#111" strokeWidth="2" /></svg></div>
        <div className="w-[40px] flex justify-center text-[24px] leading-none">简</div>
        <div className="w-[40px] flex justify-center"><svg width="26" height="26" viewBox="0 0 26 26"><circle cx="13" cy="13" r="12" fill="none" stroke="#111" strokeWidth="1.300" /><circle cx="9" cy="10" r="1.500" fill="#111" /><circle cx="17" cy="10" r="1.500" fill="#111" /><path d="M7 16c3 4 9 4 12 0" fill="none" stroke="#111" strokeWidth="1.300" /></svg></div>
        <div className="w-[40px] flex justify-center"><svg width="26" height="26" viewBox="0 0 26 26"><path d="M11 1h4l1 3 3 1 3-1 2 3-2 3 1 3-1 2 2 3-2 3-3-1-3 1-1 3h-4l-1-3-3-1-3 1-2-3 2-3-1-3 1-2-2-3 2-3 3 1 3-1z" fill="none" stroke="#111" strokeWidth="1.200" /><circle cx="13" cy="13" r="4" fill="none" stroke="#111" strokeWidth="1.200" /></svg></div>
      </div>

      {/* Borders menu */}
      <div className="absolute z-20 left-[285px] top-[165px] w-[218px] h-[769px] bg-white border border-[#c8c6c4] shadow-[0_2px_6px_rgba(0,0,0,0.22)] flex flex-col">
        <div className="h-[37px] flex items-center pl-[17px] pb-[2px] text-[15px] font-bold text-[#333]">边框</div>
        <MI icon={<BorderIcon sides={['b']} />} label="下框线" k="O" />
        <MI icon={<BorderIcon sides={['t']} />} label="上框线" k="P" />
        <MI icon={<BorderIcon sides={['l']} />} label="左框线" k="L" />
        <MI icon={<BorderIcon sides={['r']} />} label="右框线" k="R" />
        <MSep h="h-[2px]" />
        <MI icon={<BorderIcon />} label="无框线" k="N" />
        <MI icon={<BorderIcon sides={['t', 'b', 'l', 'r', 'h', 'v']} />} label="所有框线" k="A" />
        <MI icon={<BorderIcon sides={['t', 'b', 'l', 'r']} />} label="外侧框线" k="S" />
        <MI icon={<BorderIcon sides={['t', 'b', 'l', 'r']} thick />} label="粗外侧框线" k="T" />
        <MSep h="h-[4px]" />
        <MI icon={<BottomVar kind="double" />} label="双底框线" k="B" />
        <MI icon={<BottomVar kind="thick" />} label="粗下框线" k="H" />
        <MI icon={<BottomVar kind="tb" />} label="上下框线" k="D" />
        <MI icon={<BottomVar kind="tthick" />} label="上框线和粗下框线" k="C" />
        <MI icon={<BottomVar kind="tdouble" />} label="上框线和双下框线" k="U" />
        <MSep h="h-[3px]" />
        <div className="h-[34px] flex items-center pl-[17px] pb-[2px] text-[15px] font-bold text-[#333]">绘制边框</div>
        <MI icon={<DrawIcon />} label="绘制边框" k="W" />
        <MI icon={<DrawIcon grid />} label="绘制边框网格" k="G" />
        <MI icon={<Eraser />} label="擦除边框" k="E" />
        <MI icon={<ColorLineIcon />} label="线条颜色" k="I" arrow />
        <MI label="线型" k="Y" arrow active />
        <MSep h="h-[3px]" />
        <MI icon={<BorderIcon sides={['t', 'b', 'l', 'r', 'h', 'v']} />} label="其他边框" k="M" arrow="dots" />
      </div>

      {/* Line style submenu */}
      <div className="absolute z-30 left-[502px] top-[560px] w-[87px] h-[465px] bg-white border border-[#c8c6c4] shadow-[0_2px_6px_rgba(0,0,0,0.22)] flex flex-col items-stretch">
        <div className="h-[34px] pl-[17px] pt-[8px] text-[15px] leading-[22px] text-[#444]">无</div>
        {[
          <LineStyle />,
          <LineStyle dash="1 1" c="#666" />,
          <LineStyle dash="1 2" />,
          <LineStyle dash="3 1" />,
          <LineStyle dash="4 3 8 3" />,
          <LineStyle dash="3 3 8 3 3 3" />,
          <LineStyle dbl c="#333" />,
          <LineStyle sw={2} />,
          <LineStyle sw={2} dash="8 3" />,
          <LineStyle sw={2} dash="3 3 8 3" />,
          <LineStyle sw={2} dash="3 2 3 2 8 3" />,
          <LineStyle sw={2} dash="7 1 3 1" />,
        ].map((l, i) => (
          <div key={i} className="h-[33px] flex items-center pl-[18px]">{l}</div>
        ))}
        <div className="h-[33px] mx-[1px] bg-[#e1e1e1] border-2 border-black flex items-center pl-[15px]"><LineStyle sw={3} /></div>
      </div>
    </div>
  );
}
